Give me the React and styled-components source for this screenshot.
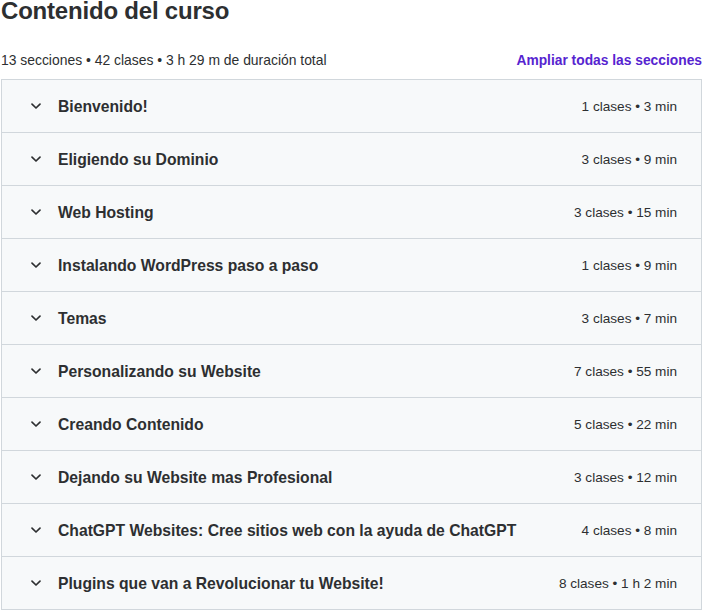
import React from 'react';
import styled, { createGlobalStyle } from 'styled-components';

const GlobalStyle = createGlobalStyle`
  body {
    margin: 0;
    background: #ffffff;
    font-family: "Liberation Sans", Arial, sans-serif;
    color: #2d2f31;
  }
`;

const Page = styled.div`
  width: 703px;
  padding: 0 1px 0 1px;
  box-sizing: border-box;
`;

const Heading = styled.h2`
  margin: 0;
  font-size: 24px;
  line-height: 22px;
  font-weight: 700;
  letter-spacing: -0.2px;
  color: #2d2f31;
`;

const SummaryBar = styled.div`
  display: flex;
  justify-content: space-between;
  align-items: center;
  margin-top: 28px;
  height: 20px;
  margin-bottom: 9px;
`;

const Summary = styled.span`
  font-size: 13.9px;
  color: #2d2f31;
`;

const ExpandAll = styled.button`
  border: 0;
  background: none;
  padding: 0;
  font-family: inherit;
  font-size: 13.8px;
  font-weight: 700;
  color: #5624d0;
  cursor: pointer;
`;

const List = styled.div`
  border: 1px solid #d1d7dc;
  border-bottom: 0;
  width: 701px;
  box-sizing: border-box;
`;

const Row = styled.div`
  display: flex;
  align-items: center;
  height: 53px;
  box-sizing: border-box;
  padding: 0 24px 0 27px;
  background: #f7f9fa;
  border-bottom: 1px solid #d1d7dc;
`;

const Chevron = styled.svg`
  width: 14px;
  height: 14px;
  flex: none;
  margin-right: 15px;
`;

const Title = styled.span`
  flex: 1;
  padding-top: 2px;
  font-size: 15.7px;
  font-weight: 700;
  color: #2d2f31;
`;

const Meta = styled.span`
  font-size: 13.6px;
  color: #2d2f31;
`;

const sections = [
  ['Bienvenido!', '1 clases • 3 min'],
  ['Eligiendo su Dominio', '3 clases • 9 min'],
  ['Web Hosting', '3 clases • 15 min'],
  ['Instalando WordPress paso a paso', '1 clases • 9 min'],
  ['Temas', '3 clases • 7 min'],
  ['Personalizando su Website', '7 clases • 55 min'],
  ['Creando Contenido', '5 clases • 22 min'],
  ['Dejando su Website mas Profesional', '3 clases • 12 min'],
  ['ChatGPT Websites: Cree sitios web con la ayuda de ChatGPT', '4 clases • 8 min'],
  ['Plugins que van a Revolucionar tu Website!', '8 clases • 1 h 2 min'],
];

function App() {
  return (
    <Page>
      <GlobalStyle />
      <Heading>Contenido del curso</Heading>
      <SummaryBar>
        <Summary>13 secciones • 42 clases • 3 h 29 m de duración total</Summary>
        <ExpandAll>Ampliar todas las secciones</ExpandAll>
      </SummaryBar>
      <List>
        {sections.map(([title, meta]) => (
          <Row key={title}>
            <Chevron viewBox="0 0 14 14">
              <path d="M3 5.2 L7 9 L11 5.2" fill="none" stroke="#2d2f31" strokeWidth="1.7" strokeLinecap="round" strokeLinejoin="round" />
            </Chevron>
            <Title>{title}</Title>
            <Meta>{meta}</Meta>
          </Row>
        ))}
      </List>
    </Page>
  );
}

export default App;
